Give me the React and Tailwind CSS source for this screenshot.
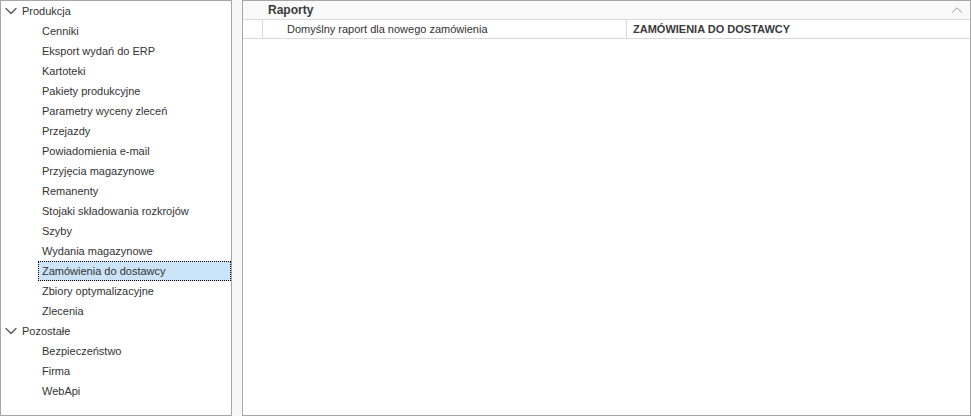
import { ChevronDown, ChevronUp } from 'lucide-react'

const groups = [
  {
    name: 'Produkcja',
    items: [
      'Cenniki',
      'Eksport wydań do ERP',
      'Kartoteki',
      'Pakiety produkcyjne',
      'Parametry wyceny zleceń',
      'Przejazdy',
      'Powiadomienia e-mail',
      'Przyjęcia magazynowe',
      'Remanenty',
      'Stojaki składowania rozkrojów',
      'Szyby',
      'Wydania magazynowe',
      'Zamówienia do dostawcy',
      'Zbiory optymalizacyjne',
      'Zlecenia',
    ],
  },
  {
    name: 'Pozostałe',
    items: ['Bezpieczeństwo', 'Firma', 'WebApi'],
  },
]

const selected = 'Zamówienia do dostawcy'

function TreeGroup({ group }) {
  return (
    <div>
      <div className="flex h-5 items-center">
        <ChevronDown className="ml-[0px] h-5 w-5 text-[#5a5a5a]" strokeWidth={1.6} />
        <span className="ml-[1px]">{group.name}</span>
      </div>
      {group.items.map((item) => {
        const isSel = item === selected
        return (
          <div key={item} className="flex h-5 items-center pl-[37px]">
            <div
              className={`flex h-5 flex-1 items-center pl-[3px] ${
                isSel ? 'border border-dotted border-black bg-[#cce4f7]' : 'border border-transparent'
              }`}
            >
              {item}
            </div>
          </div>
        )
      })}
    </div>
  )
}

export default function App() {
  return (
    <div
      className="flex h-[416px] w-[971px] gap-[10px] bg-[#f7f7f7] text-[11px] text-[#333]"
      style={{ fontFamily: '"Liberation Sans", Arial, sans-serif' }}
    >
      <div className="w-[232px] shrink-0 border border-[#a6a6a6] bg-white">
        {groups.map((g) => (
          <TreeGroup key={g.name} group={g} />
        ))}
      </div>

      <div className="flex-1 border border-[#a6a6a6] bg-white">
        <div className="flex h-[19px] items-center justify-between border-b border-[#dadada] bg-[#f9f9f9] pl-[25px] pr-[4px]">
          <span className="text-[12px] font-bold text-[#3a3a3a]">Raporty</span>
          <ChevronUp className="h-[18px] w-[18px] text-[#8a8a8a]" strokeWidth={1.2} />
        </div>
        <div className="flex h-[19px] border-b border-[#dadada]">
          <div className="w-[20px] shrink-0 border-r border-[#dadada] bg-white" />
          <div className="flex w-[364px] shrink-0 items-center border-r border-[#dadada] pl-[24px]">
            Domyślny raport dla nowego zamówienia
          </div>
          <div className="flex flex-1 items-center pl-[6px] font-bold text-[#3a3a3a]">
            ZAMÓWIENIA DO DOSTAWCY
          </div>
        </div>
      </div>
    </div>
  )
}
